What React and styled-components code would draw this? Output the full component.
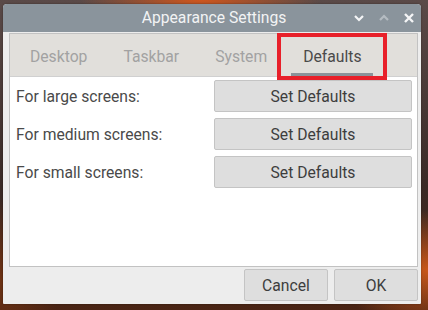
import React from 'react'
import styled, {createGlobalStyle} from 'styled-components'

const GlobalStyle = createGlobalStyle`
  html, body {
    margin: 0;
    padding: 0;
  }
  body {
    width: 428px;
    height: 310px;
    overflow: hidden;
    font-family: Roboto, 'Noto Sans', sans-serif;
    background:
      radial-gradient(ellipse 120px 20px at 200px 0px, #d0561c 0%, rgba(208, 86, 28, 0) 100%),
      radial-gradient(ellipse 90px 60px at 428px 270px, #c8561a 0%, rgba(200, 86, 26, 0) 100%),
      radial-gradient(ellipse 60px 80px at 0px 280px, #6e3214 0%, rgba(110, 50, 20, 0) 100%),
      linear-gradient(180deg, #5a4a48 0%, #3a2a26 60%, #4a2414 100%);
  }
`

const Window = styled.div`
  position: relative;
  margin: 4px 0 0 3px;
  width: 418px;
  height: 300px;
  background: #ededed;
  border-radius: 4px 4px 1px 1px;
  display: flex;
  flex-direction: column;
  box-shadow: 0 0 2px rgba(0, 0, 0, 0.4);
`

const TitleBar = styled.div`
  height: 28px;
  background: #8a949c;
  border-radius: 4px 4px 0 0;
  display: flex;
  align-items: center;
  position: relative;
`

const Title = styled.div`
  flex: 1;
  text-align: center;
  color: #f2f3f4;
  font-size: 15.7px;
  padding: 0 0 1px 4px;
`

const Controls = styled.div`
  position: absolute;
  right: 6px;
  top: 0;
  height: 28px;
  display: flex;
  align-items: center;
  gap: 13px;
`

const Body = styled.div`
  flex: 1;
  display: flex;
  flex-direction: column;
  padding: 1px 3px 3px 6px;
`

const Notebook = styled.div`
  border: 1px solid #c2c2c2;
  height: 232px;
  display: flex;
  flex-direction: column;
  background: #fff;
`

const TabBar = styled.div`
  height: 42px;
  background: #e1dfdb;
  border-bottom: 1px solid #d0d0d0;
  display: flex;
  padding-left: 2px;
`

const Tab = styled.div`
  position: relative;
  padding: 3px 18px 0;
  display: flex;
  align-items: center;
  font-size: 15.7px;
  color: ${p => (p.$active ? '#4a4a4a' : '#a2a2a2')};

  &::after {
    content: '';
    display: ${p => (p.$active ? 'block' : 'none')};
    position: absolute;
    left: 6px;
    right: 6px;
    bottom: 0;
    height: 3px;
    background: #8b939a;
  }
`

const Highlight = styled.div`
  position: absolute;
  left: 274px;
  top: 29px;
  width: 102px;
  height: 39px;
  border: 4px solid #e8202a;
  pointer-events: none;
`

const Page = styled.div`
  flex: 1;
  padding: 3px 5px 0 6px;
  display: flex;
  flex-direction: column;
  gap: 6px;
`

const Row = styled.div`
  display: flex;
  align-items: center;
  justify-content: space-between;
`

const Label = styled.span`
  font-size: 15.7px;
  color: #4a4a4a;
`

const Button = styled.button`
  width: ${p => p.$width}px;
  height: 32px;
  background: #dedede;
  border: 1px solid #c4c4c4;
  border-radius: 2px;
  font-family: Roboto, 'Noto Sans', sans-serif;
  font-size: 15.7px;
  color: #3d3d3d;
  padding: 0;
`

const Footer = styled.div`
  display: flex;
  justify-content: flex-end;
  gap: 6px;
  padding-top: 2px;
`

const Chevron = ({up, color}) => (
  <svg width="12" height="10" viewBox="0 0 12 10">
    <path
      d={up ? 'M2 7 L6 3 L10 7' : 'M2 3 L6 7 L10 3'}
      fill="none"
      stroke={color}
      strokeWidth="2.2"
    />
  </svg>
)

const Close = () => (
  <svg width="12" height="12" viewBox="0 0 12 12">
    <path d="M2 2 L10 10 M10 2 L2 10" stroke="#f4f5f6" strokeWidth="2.4" />
  </svg>
)

const rows = ['For large screens:', 'For medium screens:', 'For small screens:']
const tabs = ['Desktop', 'Taskbar', 'System', 'Defaults']

const App = () => (
  <>
    <GlobalStyle />
    <Window>
      <TitleBar>
        <Title>Appearance Settings</Title>
        <Controls>
          <Chevron color="#f4f5f6" />
          <Chevron up color="#b4bbc1" />
          <Close />
        </Controls>
      </TitleBar>
      <Body>
        <Notebook>
          <TabBar>
            {tabs.map(t => (
              <Tab key={t} $active={t === 'Defaults'}>{t}</Tab>
            ))}
          </TabBar>
          <Page>
            {rows.map(r => (
              <Row key={r}>
                <Label>{r}</Label>
                <Button $width={198}>Set Defaults</Button>
              </Row>
            ))}
          </Page>
        </Notebook>
        <Footer>
          <Button $width={84}>Cancel</Button>
          <Button $width={84}>OK</Button>
        </Footer>
      </Body>
      <Highlight />
    </Window>
  </>
)

export default App
